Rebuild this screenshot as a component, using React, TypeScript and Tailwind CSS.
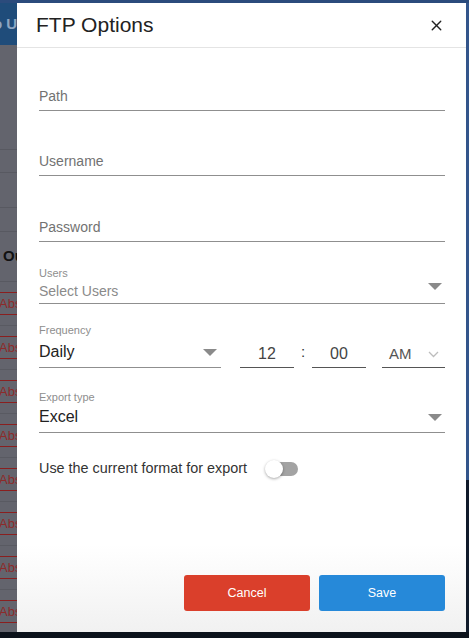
import { X } from 'lucide-react'

const font = { fontFamily: '"Liberation Sans", Arial, sans-serif' }

function Caret({ className = '' }: { className?: string }) {
  return (
    <svg width="14" height="7" viewBox="0 0 14 7" className={className}>
      <polygon points="0,0 14,0 7,7" fill="#8a8a8a" />
    </svg>
  )
}

function TextField({ label, className = '' }: { label: string; className?: string }) {
  return (
    <div className={`flex h-[31px] items-end border-b border-[#8f8f8f] pb-[4px] ${className}`}>
      <span className="text-[14px] leading-[20px] text-[#727272]">{label}</span>
    </div>
  )
}

// dimmed page behind the dialog, only a sliver shows on the left
function PageSliver() {
  const rows = [0, 1, 2, 3, 4, 5, 6, 7]
  return (
    <div className="flex w-[17px] shrink-0 flex-col overflow-hidden bg-[#63646d]">
      <div className="flex h-[42px] shrink-0 items-center bg-[#1f4c7a]">
        <span className="ml-[-7px] whitespace-nowrap text-[15px] font-bold text-[#8da6c2]">o U</span>
      </div>
      <div className="h-[105px] shrink-0 border-b border-[#585961]" />
      <div className="h-[23px] shrink-0 border-b border-[#585961]" />
      <div className="h-[35px] shrink-0 border-b border-[#585961]" />
      <div className="h-[24px] shrink-0 border-b border-[#585961]" />
      <div className="flex h-[50px] shrink-0 items-center border-b border-[#585961] pl-[3px]">
        <span className="whitespace-nowrap text-[15px] font-bold text-[#111]">Ou</span>
      </div>
      <div className="flex shrink-0 flex-col pt-[10px]">
        {rows.map((r) => (
          <div key={r} className="flex h-[44px] shrink-0 flex-col">
            <div className="flex h-[23px] items-center border-y border-[#8a1f1f]">
              <span className="ml-[-1px] whitespace-nowrap text-[13px] text-[#8e2a2a]">Abs</span>
            </div>
            <div className="mt-[10px] border-b border-[#595a62]" />
          </div>
        ))}
      </div>
    </div>
  )
}

export default function App() {
  return (
    <div className="flex h-[638px] w-[469px] flex-col overflow-hidden bg-[#0c121b]" style={font}>
      <div className="h-[3px] shrink-0 bg-[#2b4b7c]" />
      <div className="flex h-[629px] shrink-0">
        <PageSliver />

        <div className="flex w-[449px] shrink-0 flex-col rounded-br-[6px] bg-white">
          <div className="flex h-[45px] shrink-0 items-center justify-between border-b border-[#e4e4e4] pl-[19px] pr-[21px]">
            <h2 className="text-[21px] leading-[26px] text-[#222]">FTP Options</h2>
            <X size={17} strokeWidth={1.9} className="text-[#222]" />
          </div>

          <div className="flex flex-1 flex-col bg-gradient-to-b from-white from-85% to-[#f1f1f1] pb-[21px] pl-[22px] pr-[21px]">
            <TextField label="Path" className="mt-[32px]" />
            <TextField label="Username" className="mt-[34px]" />
            <TextField label="Password" className="mt-[35px]" />

            <div className="mt-[25px] flex flex-col border-b border-[#8f8f8f] pb-[3px]">
              <span className="text-[11px] leading-[13px] text-[#8e8e8e]">Users</span>
              <div className="mt-[2px] flex items-start justify-between">
                <span className="text-[14px] leading-[18px] text-[#8a8a8a]">Select Users</span>
                <Caret className="mr-[3px] mt-[1px]" />
              </div>
            </div>

            <div className="mt-[20px] flex items-end">
              <div className="flex w-[182px] flex-col border-b border-[#8f8f8f] pb-[5px]">
                <span className="text-[11px] leading-[13px] text-[#8e8e8e]">Frequency</span>
                <div className="mt-[5px] flex items-center justify-between">
                  <span className="text-[16px] leading-[20px] text-[#222]">Daily</span>
                  <Caret className="mr-[4px]" />
                </div>
              </div>
              <div className="ml-[19px] flex w-[54px] justify-center border-b border-[#555] pb-[3px]">
                <span className="text-[16px] leading-[20px] text-[#444]">12</span>
              </div>
              <div className="flex w-[18px] justify-center pb-[6px]">
                <span className="text-[15px] leading-[20px] text-[#333]">:</span>
              </div>
              <div className="flex w-[54px] justify-center border-b border-[#555] pb-[3px]">
                <span className="text-[16px] leading-[20px] text-[#444]">00</span>
              </div>
              <div className="ml-[16px] flex w-[63px] items-center justify-between border-b border-[#555] pb-[3px] pl-[7px] pr-[6px]">
                <span className="text-[15px] leading-[20px] text-[#555]">AM</span>
                <svg width="11" height="7" viewBox="0 0 11 7">
                  <polyline points="1,1 5.5,5.5 10,1" fill="none" stroke="#bdbdbd" strokeWidth="1.3" />
                </svg>
              </div>
            </div>

            <div className="mt-[23px] flex flex-col border-b border-[#8f8f8f] pb-[5px]">
              <span className="text-[11px] leading-[13px] text-[#8e8e8e]">Export type</span>
              <div className="mt-[3px] flex items-center justify-between">
                <span className="text-[16px] leading-[20px] text-[#222]">Excel</span>
                <Caret className="mr-[3px]" />
              </div>
            </div>

            <div className="mt-[26px] flex h-[20px] items-center">
              <span className="text-[14.4px] text-[#333]">Use the current format for export</span>
              <div className="ml-[18px] flex items-center">
                <div className="z-10 h-[18px] w-[18px] rounded-full bg-white shadow-[0_1px_3px_rgba(0,0,0,0.35)]" />
                <div className="ml-[-15px] h-[14px] w-[30px] rounded-full bg-[#a3a3a3]" />
              </div>
            </div>

            <div className="mt-auto flex justify-end gap-[9px]">
              <button className="h-[36px] w-[126px] rounded-[3px] bg-[#da3f2b] text-[12.5px] text-white">
                Cancel
              </button>
              <button className="h-[36px] w-[126px] rounded-[3px] bg-[#2689d9] text-[12.5px] text-white">
                Save
              </button>
            </div>
          </div>
        </div>

        <div className="flex flex-1 flex-col">
          <div className="h-[477px] bg-[#33558b]" />
          <div className="flex-1 bg-[#101a2a]" />
        </div>
      </div>
    </div>
  )
}
